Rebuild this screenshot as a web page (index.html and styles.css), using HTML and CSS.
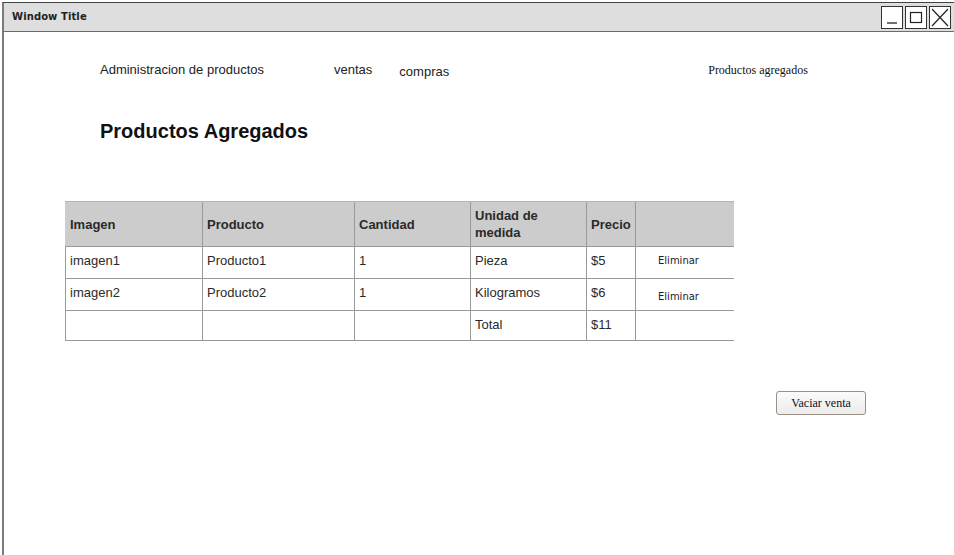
FILE: index.html
```html
<!DOCTYPE html>
<html>
<head>
<meta charset="utf-8">
<link rel="stylesheet" href="styles.css">
</head>
<body>
<div class="window">
  <div class="titlebar">
    <span class="title">Window Title</span>
    <div class="controls">
      <span class="ctl"><svg width="22" height="23" viewBox="0 0 22 23"><line x1="6" y1="17" x2="16" y2="17" stroke="#222" stroke-width="1.3"/></svg></span>
      <span class="ctl"><svg width="22" height="23" viewBox="0 0 22 23"><rect x="5.5" y="6.5" width="11" height="10" fill="none" stroke="#222" stroke-width="1.2"/></svg></span>
      <span class="ctl"><svg width="22" height="23" viewBox="0 0 22 23"><path d="M3 3 L19 20 M19 3 L3 20" stroke="#222" stroke-width="1.2"/></svg></span>
    </div>
  </div>
  <div class="content">
    <div class="nav">
      <span class="nav-admin">Administracion de productos</span>
      <span class="nav-ventas">ventas</span>
      <span class="nav-compras">compras</span>
      <span class="nav-agregados">Productos agregados</span>
    </div>
    <h1 class="heading">Productos Agregados</h1>
    <table class="grid">
      <colgroup>
        <col class="c1"><col class="c2"><col class="c3"><col class="c4"><col class="c5"><col class="c6">
      </colgroup>
      <thead>
        <tr><th>Imagen</th><th>Producto</th><th>Cantidad</th><th>Unidad de<br>medida</th><th>Precio</th><th></th></tr>
      </thead>
      <tbody>
        <tr class="r1"><td>imagen1</td><td>Producto1</td><td>1</td><td>Pieza</td><td>$5</td><td class="del">Eliminar</td></tr>
        <tr class="r2"><td>imagen2</td><td>Producto2</td><td>1</td><td>Kilogramos</td><td>$6</td><td class="del low">Eliminar</td></tr>
        <tr class="r3"><td></td><td></td><td></td><td>Total</td><td>$11</td><td></td></tr>
      </tbody>
    </table>
    <div class="actions">
      <button class="btn">Vaciar venta</button>
    </div>
  </div>
</div>
</body>
</html>
```

FILE: styles.css
```css
html, body {
  margin: 0;
  padding: 0;
  background: #fff;
}
body {
  width: 954px;
  height: 555px;
  overflow: hidden;
  font-family: "Liberation Sans", Arial, sans-serif;
}
.window {
  margin: 2px 0 0 2px;
  height: 553px;
  border-left: 2px solid #7a7a7a;
  border-top: 1px solid #444;
  display: flex;
  flex-direction: column;
  box-sizing: border-box;
}
.titlebar {
  height: 28px;
  background: #dedede;
  border-bottom: 1px solid #6b6b6b;
  display: flex;
  align-items: center;
  justify-content: space-between;
  padding-left: 8px;
  flex-shrink: 0;
}
.title {
  font-family: "DejaVu Sans", sans-serif;
  font-weight: bold;
  font-size: 10px;
  color: #222;
  letter-spacing: 0.1px;
  margin-top: -1px;
}
.controls {
  display: flex;
  gap: 2px;
  padding-right: 3px;
}
.ctl {
  width: 22px;
  height: 23px;
  box-sizing: border-box;
  border: 1px solid #333;
  background: #fff;
  display: block;
}
.ctl svg {
  display: block;
  margin: -1px;
}
.content {
  flex: 1;
  padding-left: 61px;
}
.nav {
  display: flex;
  align-items: baseline;
  height: 20px;
  margin-top: 30px;
  font-size: 13px;
  color: #222;
}
.nav-admin { margin-left: 35px; }
.nav-ventas { margin-left: 70px; }
.nav-compras { margin-left: 27px; position: relative; top: 2px; }
.nav-agregados {
  margin-left: 259px;
  font-family: "Liberation Serif", "Times New Roman", serif;
  font-size: 12px;
  color: #111;
}
.heading {
  margin: 37px 0 0 35px;
  font-size: 20px;
  font-weight: bold;
  color: #111;
  line-height: 24px;
}
.grid {
  margin-top: 58px;
  border-collapse: collapse;
  table-layout: fixed;
  width: 668px;
  font-size: 13px;
  color: #2a2a2a;
}
.c1 { width: 137px; }
.c2 { width: 152px; }
.c3 { width: 116px; }
.c4 { width: 116px; }
.c5 { width: 49px; }
.c6 { width: 98px; }
.grid th {
  background: #cccccc;
  height: 44px;
  text-align: left;
  font-weight: bold;
  padding: 0 4px;
  line-height: 17px;
  border-top: 1px solid #b5b5b5;
  border-left: 1px solid #999;
  border-bottom: 1px solid #999;
  color: #2a2a2a;
}
.grid td {
  text-align: left;
  padding: 0 4px 4px 4px;
  border-left: 1px solid #999;
  border-bottom: 1px solid #999;
  vertical-align: middle;
}
.grid th:first-child { border-left-color: #cccccc; }
.r1 td { height: 27px; }
.r2 td { height: 27px; }
.r3 td { height: 25px; padding-top: 1px; padding-bottom: 3px; }
.grid td.del {
  font-family: "DejaVu Sans", sans-serif;
  font-size: 10px;
  padding-left: 22px;
  color: #222;
}
.grid td.del.low { padding-top: 3px; padding-bottom: 0; }
.actions {
  display: flex;
  justify-content: flex-end;
  width: 801px;
  margin-top: 50px;
}
.btn {
  width: 90px;
  height: 24px;
  font-family: "Liberation Serif", "Times New Roman", serif;
  font-size: 12px;
  color: #111;
  background: linear-gradient(#fbfbfb, #ececec);
  border: 1px solid #9a8f86;
  border-radius: 3px;
  padding: 0;
}
```
